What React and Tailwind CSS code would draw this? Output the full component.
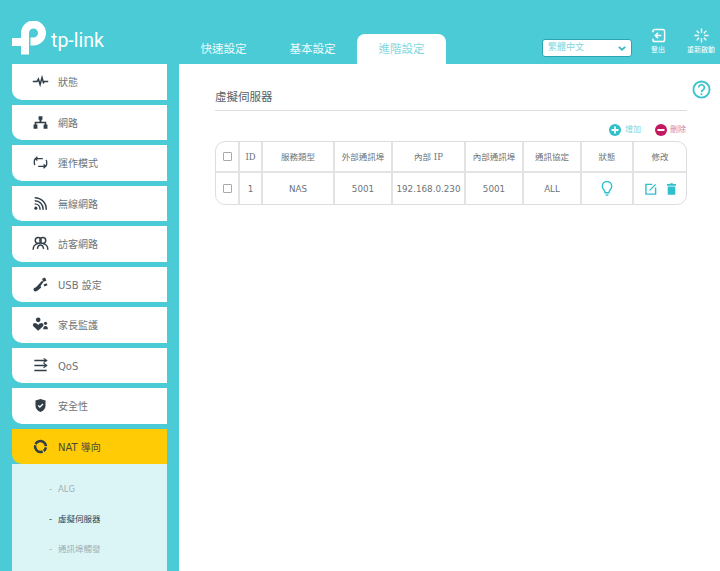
import React from 'react';

const sans = 'font-["DejaVu_Sans","Noto_Sans_CJK_TC",sans-serif]';
const serif = 'font-["DejaVu_Serif","Noto_Sans_CJK_TC",serif]';

// Sidebar icons
const icons = {
  pulse: (
    <path d="M1 11h5.500l1.800-3 2.200 7 2.500-9 1.800 6.500 1.200-1.500H21" fill="none" stroke="currentColor" strokeWidth="2" />
  ),
  network: (
    <path d="M8.500 3h5v4.500h-1.200V10h6.200v3.500H20V19h-5v-5.500h1.500V12h-11v1.500H7V19H2v-5.500h1.500V10h6.200V7.500H8.500z" fill="currentColor" />
  ),
  mode: (
    <g fill="none" stroke="currentColor" strokeWidth="1.700">
      <path d="M14 6H6a3 3 0 0 0-3 3v3a3 3 0 0 0 1 2.200" />
      <path d="M8 16h8a3 3 0 0 0 3-3v-3a3 3 0 0 0-1-2.200" />
      <path d="M7 3.500L4.500 6 7 8.500M15 13.500l2.500 2.500-2.500 2.500" />
    </g>
  ),
  wireless: (
    <g fill="none" stroke="currentColor" strokeWidth="1.900">
      <path d="M3.500 3.500c8.500 0 15 6.500 15 15.500M3.500 7.500c6.500 0 11 5 11 11.500M3.500 11.500c4 0 7 3 7 7.500" />
      <circle cx="5" cy="17" r="2" fill="currentColor" stroke="none" />
    </g>
  ),
  guest: (
    <g fill="none" stroke="currentColor" strokeWidth="1.900">
      <circle cx="8" cy="7" r="3.800" />
      <circle cx="14" cy="7" r="3.800" />
      <path d="M1.500 19c0-4.500 2.500-7 6-7.500M20.500 19c0-4.500-2.500-7-6-7.500M7 18c.5-3 2-5 4-5s3.500 2 4 5" />
    </g>
  ),
  usb: (
    <g fill="currentColor">
      <circle cx="4.500" cy="17.500" r="2.500" />
      <path d="M4 16l9-10 2 1.500-4 5.500 1 2-5 4z" />
      <path d="M13 3.500l4-1.500 1.500 4-4 1.500zM15 11l4-1.500 1 2.500-4 1.500z" />
    </g>
  ),
  parental: (
    <g fill="currentColor">
      <circle cx="8" cy="5" r="3" />
      <path d="M8 19l-6-5.500C.5 12 1 9 3.500 9 5.500 9 7 10 8 11.500 9 10 10.500 9 12.500 9c2.500 0 3 3 1.500 4.500z" />
      <circle cx="17.500" cy="9.500" r="2" />
      <path d="M14.500 17c0-3 1-4 3-4s3 1 3 4z" />
    </g>
  ),
  qos: (
    <g fill="none" stroke="currentColor" strokeWidth="1.900">
      <path d="M3 4.500h16M3 11h16M3 17.500h16" />
      <path d="M15 8l4 3-4 3M15 1.800l4 2.700-4 2.700" strokeWidth="1.500" />
    </g>
  ),
  security: (
    <g>
      <path d="M11 2.500l6.500 2v6.500c0 4-2.500 7-6.500 8.500-4-1.500-6.500-4.500-6.500-8.500V4.500z" fill="currentColor" />
      <path d="M8 10.800l2.200 2.200 4-4" fill="none" stroke="#fff" strokeWidth="1.600" />
    </g>
  ),
  nat: (
    <g fill="none" stroke="currentColor" strokeWidth="3.400">
      <circle cx="11" cy="11" r="7" strokeDasharray="15 1.500 5.500 1.500 15 1.500 3.500 1.500" transform="rotate(-130 11 11)" />
    </g>
  ),
};

const menu = [
  { label: '狀態', icon: 'pulse' },
  { label: '網路', icon: 'network' },
  { label: '運作模式', icon: 'mode' },
  { label: '無線網路', icon: 'wireless' },
  { label: '訪客網路', icon: 'guest' },
  { label: 'USB 設定', icon: 'usb' },
  { label: '家長監護', icon: 'parental' },
  { label: 'QoS', icon: 'qos' },
  { label: '安全性', icon: 'security' },
];

const columns = [
  { width: 'w-[24px]' },
  { width: 'w-[23px]' },
  { width: 'w-[72px]' },
  { width: 'w-[58px]' },
  { width: 'w-[73px]' },
  { width: 'w-[58px]' },
  { width: 'w-[58px]' },
  { width: 'w-[52px]' },
  { width: 'w-[52px]' },
];

function MenuItem({ label, icon, active }) {
  return (
    <div
      className={`flex h-[35.500px] shrink-0 items-center rounded-bl-[10px] ${
        active ? 'bg-[#ffcb05] text-[#4a4a38]' : 'bg-white text-[#6b7478]'
      }`}
    >
      <svg viewBox="0 0 22 22" className="ml-[19.500px] h-[17px] w-[17px] text-[#333f48]">
        {icons[icon]}
      </svg>
      <span className="ml-[9.500px] pt-[2px] text-[10px]">{label}</span>
    </div>
  );
}

function SubItem({ label, active }) {
  return (
    <div className={`flex h-[30px] items-center text-[8.500px] ${active ? 'text-[#333f48]' : 'text-[#9fb0b4]'}`}>
      <span className="ml-[37px] w-[9px]">-</span>
      <span>{label}</span>
    </div>
  );
}

function Checkbox() {
  return <span className="block h-[9px] w-[9px] rounded-[1px] border border-[#a9a9a9] bg-white" />;
}

function Cell({ col, pad = '', children }) {
  return (
    <div className={`flex shrink-0 items-center justify-center border-r-2 border-[#e3e3e3] last:border-r-0 ${pad} ${col.width}`}>
      {children}
    </div>
  );
}

export default function App() {
  return (
    <div className={`flex h-[571px] w-[720px] flex-col overflow-hidden bg-[#4acbd6] ${sans}`}>
      <header className="flex h-[64px] shrink-0">
        <div className="flex w-[179px] items-start pl-[12px] pt-[21px]">
          <svg viewBox="0 0 34 34" className="h-[34px] w-[34px]">
            <path
              fill="#fff"
              d="M9 12a12.500 12.500 0 1 1 12.500 12.500h-3v-8h3a4.500 4.500 0 1 0-4.500-4.500V33.500H9V25H0v-8h9z"
            />
          </svg>
          <span className='ml-[5px] mt-[8px] font-["Roboto",sans-serif] text-[19.500px] font-normal leading-[24px] text-white'>tp-link</span>
        </div>
        <nav className="flex items-end text-[11.500px]">
          <div className="flex h-[30px] w-[89px] items-center justify-center pt-[2px] text-white/90">快速設定</div>
          <div className="flex h-[30px] w-[89px] items-center justify-center pt-[2px] text-white/90">基本設定</div>
          <div className="flex h-[30px] w-[89px] items-center justify-center rounded-t-[8px] bg-white pt-[2px] text-[#83d9e0]">進階設定</div>
        </nav>
        <div className="ml-[96px] mt-[39px] flex h-[18px] w-[90px] items-center justify-between rounded-[3px] border border-[#2ba5b1] bg-white pl-[5px] pr-[5px] text-[9px] text-[#7fd5dd]">
          繁體中文
          <svg viewBox="0 0 10 6" className="h-[5px] w-[8px] text-[#3fb8c4]">
            <path d="M1 1l4 3.500L9 1" fill="none" stroke="currentColor" strokeWidth="2.400" />
          </svg>
        </div>
        <div className="ml-[10px] flex w-[32px] flex-col items-center pt-[28px] text-[7px] text-white">
          <svg viewBox="0 0 16 16" className="h-[15px] w-[15px]">
            <path d="M2 4.500V3.500a2 2 0 0 1 2-2h8.500a2 2 0 0 1 2 2v9a2 2 0 0 1-2 2H4a2 2 0 0 1-2-2v-1" fill="none" stroke="#fff" strokeWidth="1.600" />
            <path d="M11 8H5M7.500 5L4.500 8l3 3" fill="none" stroke="#fff" strokeWidth="1.600" />
          </svg>
          <span className="mt-[2px]">登出</span>
        </div>
        <div className="ml-[11px] flex w-[32px] flex-col items-center whitespace-nowrap pt-[28px] text-[7px] text-white">
          <svg viewBox="0 0 16 16" className="h-[15px] w-[15px]">
            <path
              d="M8 .5v4.500M8 11v4.500M.5 8H5M11 8h4.500M2.800 2.800l2.700 2.700M13.200 2.800l-2.700 2.700M2.800 13.200l2.700-2.700M13.200 13.200l-2.700-2.700"
              fill="none"
              stroke="#fff"
              strokeWidth="1.500"
            />
          </svg>
          <span className="mt-[2px]">重新啟動</span>
        </div>
      </header>

      <div className="flex min-h-0 flex-1">
        <aside className="ml-[12px] flex w-[155px] shrink-0 flex-col gap-[5px]">
          {menu.map((item) => (
            <MenuItem key={item.label} {...item} />
          ))}
          <div className="flex flex-1 flex-col">
            <MenuItem label="NAT 導向" icon="nat" active />
            <div className="flex-1 bg-[#dbf5f7] pt-[10.500px]">
              <SubItem label="ALG" />
              <SubItem label="虛擬伺服器" active />
              <SubItem label="通訊埠觸發" />
            </div>
          </div>
        </aside>

        <main className="ml-[12px] flex-1 bg-white pl-[36px] pr-[33px] text-[#6b7478]">
          <div className="flex h-[47px] items-end justify-between border-b border-[#dcdcdc] pb-[4px]">
            <span className="text-[11.500px] text-[#555f63]">虛擬伺服器</span>
          </div>
          <div className="flex h-[30px] items-center justify-end pr-[1px] pt-[7px] text-[8px]">
            <span className="flex items-center gap-[4px] text-[#7fd5dd]">
              <svg viewBox="0 0 12 12" className="h-[12px] w-[12px]">
                <circle cx="6" cy="6" r="6" fill="#2fc0cd" />
                <path d="M6 2.500v7M2.500 6h7" stroke="#fff" strokeWidth="1.800" />
              </svg>
              增加
            </span>
            <span className="ml-[14px] flex items-center gap-[3px] text-[#d77fa6]">
              <svg viewBox="0 0 12 12" className="h-[12px] w-[12px]">
                <circle cx="6" cy="6" r="6" fill="#c2185f" />
                <path d="M2.500 6h7" stroke="#fff" strokeWidth="2" />
              </svg>
              刪除
            </span>
          </div>
          <div className="rounded-[10px] border border-[#dedede]">
            <div className="flex h-[31px] border-b-2 border-[#e3e3e3] text-[8.500px]">
              <Cell col={columns[0]}><Checkbox /></Cell>
              <Cell col={columns[1]} pad="pt-[1px]"><span className={serif}>ID</span></Cell>
              <Cell col={columns[2]} pad="pt-[1px]">服務類型</Cell>
              <Cell col={columns[3]} pad="pt-[1px]">外部通訊埠</Cell>
              <Cell col={columns[4]} pad="pt-[1px]"><span>內部 <span className={serif}>IP</span></span></Cell>
              <Cell col={columns[5]} pad="pt-[1px]">內部通訊埠</Cell>
              <Cell col={columns[6]} pad="pt-[1px]">通訊協定</Cell>
              <Cell col={columns[7]} pad="pt-[1px]">狀態</Cell>
              <Cell col={columns[8]} pad="pt-[1px]">修改</Cell>
            </div>
            <div className="flex h-[31px] text-[8.750px]">
              <Cell col={columns[0]}><Checkbox /></Cell>
              <Cell col={columns[1]} pad="pt-[2px]">1</Cell>
              <Cell col={columns[2]} pad="pt-[2px]">NAS</Cell>
              <Cell col={columns[3]} pad="pt-[2px]">5001</Cell>
              <Cell col={columns[4]} pad="pt-[2px]">192.168.0.230</Cell>
              <Cell col={columns[5]} pad="pt-[2px]">5001</Cell>
              <Cell col={columns[6]} pad="pt-[2px]">ALL</Cell>
              <Cell col={columns[7]}>
                <svg viewBox="0 0 12 16" className="h-[15px] w-[12px]">
                  <path
                    d="M4 12.500C4 10 1 9 1 5.500a5 5 0 0 1 10 0C11 9 8 10 8 12.500z"
                    fill="none"
                    stroke="#2fc0cd"
                    strokeWidth="1.500"
                  />
                  <path d="M4.500 15h3" stroke="#2fc0cd" strokeWidth="1.500" />
                </svg>
              </Cell>
              <Cell col={columns[8]}>
                <span className="flex items-center gap-[10px]">
                  <svg viewBox="0 0 13 13" className="h-[12px] w-[12px]">
                    <path d="M8 1.500H1v10.500h10.500V5" fill="none" stroke="#2fc0cd" strokeWidth="1.500" />
                    <path d="M5 8l6.500-6.500" stroke="#2fc0cd" strokeWidth="1.500" />
                  </svg>
                  <svg viewBox="0 0 10 13" className="h-[12px] w-[9px]">
                    <path d="M3.500 0h3v1H10v1.800H0V1h3.500zM.8 3.800h8.400V13H.8z" fill="#2fc0cd" />
                  </svg>
                </span>
              </Cell>
            </div>
          </div>
        </main>
      </div>

      <svg viewBox="0 0 20 20" className="fixed left-[692px] top-[80px] h-[19px] w-[19px]">
        <circle cx="10" cy="10" r="8.500" fill="none" stroke="#3cc4d0" strokeWidth="2" />
        <path d="M7 8a3 3 0 1 1 4.500 2.600c-1 .6-1.500 1-1.500 2.400" fill="none" stroke="#3cc4d0" strokeWidth="1.800" />
        <circle cx="10" cy="15" r="1.100" fill="#3cc4d0" />
      </svg>
    </div>
  );
}
